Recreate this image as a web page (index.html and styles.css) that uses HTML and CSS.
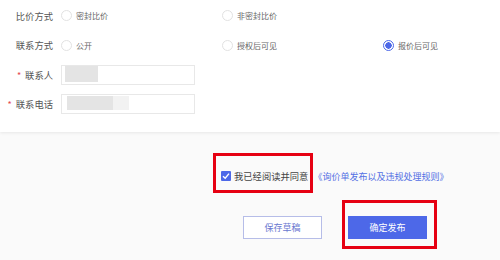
FILE: index.html
```html
<!DOCTYPE html>
<html lang="zh-CN">
<head>
    <meta charset="UTF-8">
    <meta name="viewport" content="width=device-width, initial-scale=1.0">
    <title>发布询价单</title>
    <link rel="stylesheet" href="styles.css">
</head>
<body>
    <div class="form-section">
        <div class="form-row">
            <div class="form-label">比价方式</div>
            <div class="radio-group">
                <label class="radio-item"><span class="radio"></span>密封比价</label>
                <label class="radio-item"><span class="radio"></span>非密封比价</label>
            </div>
        </div>
        <div class="form-row">
            <div class="form-label">联系方式</div>
            <div class="radio-group">
                <label class="radio-item"><span class="radio"></span>公开</label>
                <label class="radio-item"><span class="radio"></span>授权后可见</label>
                <label class="radio-item"><span class="radio checked"></span>报价后可见</label>
            </div>
        </div>
        <div class="form-row">
            <div class="form-label"><span class="required">*</span>联系人</div>
            <div class="text-input">
                <span class="masked masked-name"></span>
            </div>
        </div>
        <div class="form-row">
            <div class="form-label"><span class="required">*</span>联系电话</div>
            <div class="text-input">
                <span class="masked masked-phone"></span>
            </div>
        </div>
    </div>

    <div class="footer-section">
        <div class="agree-row">
            <label class="agree-box">
                <span class="checkbox">
                    <svg width="8" height="8" viewBox="0 0 8 8"><path d="M1 4.2 L3.2 6.2 L7 1.6" fill="none" stroke="#fff" stroke-width="1.4"/></svg>
                </span>
                我已经阅读并同意
            </label>
            <a class="rule-link" href="#">《询价单发布以及违规处理规则》</a>
        </div>
        <div class="button-row">
            <button class="save-btn" type="button">保存草稿</button>
            <div class="highlight-box">
                <button class="publish-btn" type="button">确定发布</button>
            </div>
        </div>
    </div>
</body>
</html>
```

FILE: styles.css
```css
body {
    margin: 0;
    padding: 0;
    font-family: "Noto Sans CJK SC", "Liberation Sans", sans-serif;
    background-color: #fafafa;
    width: 500px;
    height: 260px;
    overflow: hidden;
}
.form-section {
    background-color: #fff;
    height: 132px;
    padding-top: 1px;
    box-sizing: border-box;
    box-shadow: 0 1px 3px rgba(0, 0, 0, 0.08);
    position: relative;
}
.form-row {
    display: flex;
    align-items: center;
    height: 29.5px;
}
.form-label {
    flex: none;
    width: 53px;
    text-align: right;
    font-size: 9.3px;
    color: #555;
    margin-right: 8px;
    white-space: nowrap;
}
.required {
    color: #e5484d;
    margin-right: 4px;
    font-size: 9px;
}
.radio-group {
    display: flex;
}
.radio-item {
    flex: none;
    display: flex;
    align-items: center;
    width: 161px;
    font-size: 8px;
    color: #666;
}
.radio-item:last-child {
    width: auto;
}
.radio {
    width: 9px;
    height: 9px;
    border: 1px solid #e2e2e2;
    border-radius: 50%;
    margin-right: 4px;
    box-sizing: content-box;
}
.radio.checked {
    border-color: #4d68e8;
    background: radial-gradient(circle, #4d68e8 0 3px, #fff 3.4px);
}
.text-input {
    width: 132px;
    height: 18px;
    border: 1px solid #e8e8e8;
    background-color: #fff;
    display: flex;
    align-items: flex-start;
}
.masked {
    display: block;
    background-color: #e4e4e4;
}
.masked-name {
    width: 33px;
    height: 16px;
    margin-left: 3px;
}
.masked-phone {
    width: 46px;
    height: 14px;
    margin-left: 5px;
    margin-top: 1px;
    box-shadow: 16px 0 0 #f2f2f2;
}
.footer-section {
    padding-top: 21px;
}
.agree-row {
    display: flex;
    align-items: center;
    padding-left: 213px;
}
.agree-box {
    display: flex;
    align-items: center;
    border: 3px solid #e60012;
    height: 28px;
    padding: 6px 2px 0 5px;
    box-sizing: content-box;
    font-size: 9.3px;
    color: #444;
    white-space: nowrap;
}
.checkbox {
    width: 10px;
    height: 10px;
    background-color: #4d68e8;
    border-radius: 1px;
    margin-right: 3px;
    display: flex;
    align-items: center;
    justify-content: center;
}
.rule-link {
    font-size: 9px;
    color: #5470e4;
    text-decoration: none;
    margin-top: 6px;
    white-space: nowrap;
}
.button-row {
    display: flex;
    align-items: flex-start;
    padding-left: 243px;
    margin-top: 7px;
}
.save-btn {
    width: 79px;
    height: 23px;
    margin-top: 16px;
    border: 1px solid #b6bde8;
    background-color: #fff;
    color: #6a78d0;
    font-size: 9px;
    font-family: inherit;
    padding: 0;
}
.highlight-box {
    border: 3px solid #e60012;
    margin-left: 20px;
    padding: 13px 7px 7px 3px;
}
.publish-btn {
    width: 79px;
    height: 23px;
    border: none;
    background-color: #4d68e8;
    color: #fff;
    font-size: 9px;
    font-family: inherit;
    padding: 0;
    display: block;
}
```
